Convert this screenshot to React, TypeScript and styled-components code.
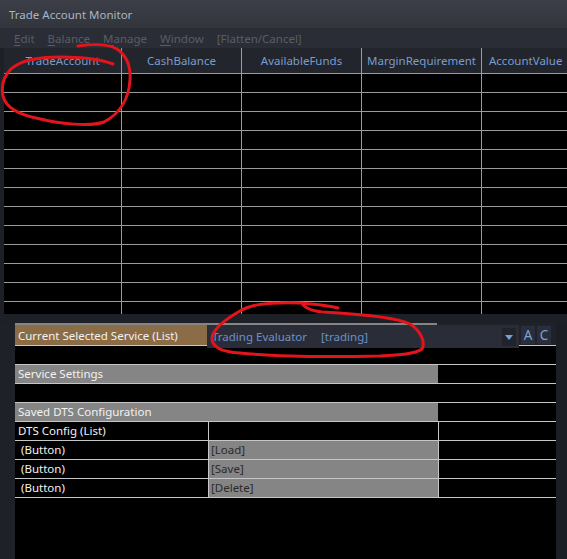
import styled, { createGlobalStyle } from 'styled-components';

const GlobalStyle = createGlobalStyle`
  html, body {
    margin: 0;
    padding: 0;
    background: #1e2027;
    overflow: hidden;
  }
`;

const Window = styled.div`
  position: relative;
  width: 567px;
  height: 559px;
  display: flex;
  flex-direction: column;
  background: #1e2027;
  overflow: hidden;
  font-family: "Noto Sans", "Open Sans", sans-serif;
  font-size: 11.5px;
`;

const TitleBar = styled.div`
  flex: none;
  height: 28px;
  display: flex;
  align-items: center;
  padding-left: 9px;
  background: linear-gradient(#3c3f47, #32353c);
  color: #a7b5c8;
  font-size: 11.5px;
`;

const MenuBar = styled.div`
  flex: none;
  height: 20px;
  display: flex;
  align-items: center;
  gap: 13px;
  padding-left: 14px;
  background: #2a2d35;
  color: #585d68;
  font-size: 11.5px;
`;

const Accel = styled.span`
  text-decoration: underline;
  text-underline-offset: 2px;
`;

const GridWrap = styled.div`
  flex: none;
  padding: 0 0 9px 4px;
`;

const Grid = styled.div`
  height: 266px;
  overflow: hidden;
  background: #000;
  display: flex;
  flex-direction: column;
`;

const HeaderRow = styled.div`
  flex: none;
  display: flex;
  height: 25px;
  background: #23252c;
  border-bottom: 1px solid #9a9a9a;
`;

const HeaderCell = styled.div<{ $w: number; $last?: boolean }>`
  flex: none;
  width: ${(p) => p.$w}px;
  border-right: ${(p) => (p.$last ? 'none' : '1px solid #9a9a9a')};
  color: #779dd0;
  line-height: 25px;
  text-align: ${(p) => (p.$last ? 'left' : 'center')};
  padding-left: ${(p) => (p.$last ? 7 : 0)}px;
  white-space: nowrap;
  overflow: hidden;
`;

const BodyRow = styled.div`
  flex: none;
  display: flex;
  height: 18px;
  border-bottom: 1px solid #9a9a9a;
`;

const BodyCell = styled.div<{ $w: number; $last?: boolean }>`
  flex: none;
  width: ${(p) => p.$w}px;
  border-right: ${(p) => (p.$last ? 'none' : '1px solid #9a9a9a')};
`;

const Panel = styled.div`
  flex: 1;
  display: flex;
`;

const PanelMargin = styled.div`
  flex: none;
  width: 15px;
  background: #1e2128;
`;

const PanelBody = styled.div`
  position: relative;
  flex: none;
  width: 541px;
  background: #000;
  display: flex;
  flex-direction: column;
`;

const Scrollbar = styled.div`
  flex: 1;
  background: #1b1e25;
`;

const PropRow = styled.div<{ $h?: number }>`
  flex: none;
  display: flex;
  height: ${(p) => p.$h ?? 18}px;
  border-bottom: 1px solid #c6c6c6;
  color: #f2f2f2;
  line-height: 18px;
`;

const LabelCell = styled.div`
  flex: none;
  width: 192px;
  box-sizing: border-box;
  border-top: 2px solid #858585;
  background: #8a6c47;
  padding-left: 3px;
  line-height: 21px;
  white-space: nowrap;
`;

const ValueBack = styled.div`
  flex: none;
  width: 230px;
  background: #858585;
`;

const RestBack = styled.div`
  flex: 1;
  background: #1f222a;
`;

const SectionCell = styled.div`
  flex: none;
  width: 423px;
  background: #858585;
  padding-left: 3px;
  box-sizing: border-box;
`;

const Cell = styled.div<{ $w?: number; $gray?: boolean; $indent?: number; $edge?: boolean }>`
  flex: ${(p) => (p.$w ? 'none' : '1')};
  width: ${(p) => (p.$w ? `${p.$w}px` : 'auto')};
  box-sizing: border-box;
  border-right: ${(p) => (p.$edge ? '1px solid #c6c6c6' : 'none')};
  background: ${(p) => (p.$gray ? '#858585' : '#000')};
  color: ${(p) => (p.$gray ? '#2b2b2b' : '#f2f2f2')};
  padding-left: ${(p) => p.$indent ?? 3}px;
  white-space: nowrap;
`;

const Editor = styled.div`
  position: absolute;
  left: 192px;
  top: 2px;
  right: 0;
  height: 21px;
  display: flex;
  align-items: flex-start;
`;

const Combo = styled.div`
  flex: none;
  width: 312px;
  height: 23px;
  box-sizing: border-box;
  display: flex;
  align-items: center;
  padding-left: 5px;
  background: #2a2d38;
  color: #6b91c6;
  position: relative;
`;

const ComboTag = styled.span`
  margin-left: 14px;
`;

const DropButton = styled.div`
  position: absolute;
  right: 3px;
  top: 3px;
  width: 14px;
  height: 18px;
  background: #20232c;
  display: flex;
  align-items: center;
  justify-content: center;
`;

const EditButton = styled.div`
  flex: none;
  width: 14px;
  height: 18px;
  margin-left: 2px;
  margin-top: 1px;
  background: #2a2e3a;
  color: #7ca2d8;
  font-size: 13.5px;
  line-height: 18px;
  text-align: center;
`;

const Marks = styled.svg`
  position: absolute;
  left: 0;
  top: 0;
  pointer-events: none;
`;

const columns = [
  { name: 'TradeAccount', w: 117 },
  { name: 'CashBalance', w: 119 },
  { name: 'AvailableFunds', w: 119 },
  { name: 'MarginRequirement', w: 119 },
  { name: 'AccountValue', w: 86 },
];

const menu = [
  { a: 'E', rest: 'dit' },
  { a: 'B', rest: 'alance' },
  { a: 'M', rest: 'anage' },
  { a: 'W', rest: 'indow' },
];

const buttons = ['[Load]', '[Save]', '[Delete]'];

export default function App() {
  return (
    <Window>
      <GlobalStyle />
      <TitleBar>Trade Account Monitor</TitleBar>
      <MenuBar>
        {menu.map((m) => (
          <span key={m.a}>
            <Accel>{m.a}</Accel>
            {m.rest}
          </span>
        ))}
        <span>[Flatten/Cancel]</span>
      </MenuBar>
      <GridWrap>
        <Grid>
          <HeaderRow>
            {columns.map((c, i) => (
              <HeaderCell key={c.name} $w={c.w} $last={i === columns.length - 1}>
                {c.name}
              </HeaderCell>
            ))}
          </HeaderRow>
          {Array.from({ length: 13 }).map((_, r) => (
            <BodyRow key={r}>
              {columns.map((c, i) => (
                <BodyCell key={c.name} $w={c.w} $last={i === columns.length - 1} />
              ))}
            </BodyRow>
          ))}
        </Grid>
      </GridWrap>
      <Panel>
        <PanelMargin />
        <PanelBody>
          <PropRow $h={22}>
            <LabelCell>Current Selected Service (List)</LabelCell>
            <ValueBack />
            <RestBack />
          </PropRow>
          <PropRow />
          <PropRow>
            <SectionCell>Service Settings</SectionCell>
          </PropRow>
          <PropRow />
          <PropRow>
            <SectionCell>Saved DTS Configuration</SectionCell>
          </PropRow>
          <PropRow>
            <Cell $w={194} $edge>DTS Config (List)</Cell>
            <Cell $w={230} $edge />
            <Cell />
          </PropRow>
          {buttons.map((b) => (
            <PropRow key={b}>
              <Cell $w={194} $edge $indent={6}>(Button)</Cell>
              <Cell $w={230} $edge $gray $indent={2}>{b}</Cell>
              <Cell />
            </PropRow>
          ))}
          <Editor>
            <Combo>
              <span>Trading Evaluator</span>
              <ComboTag>[trading]</ComboTag>
              <DropButton>
                <svg width="8" height="5" viewBox="0 0 8 5">
                  <path d="M0 0 L8 0 L4 5 Z" fill="#7a9fd3" />
                </svg>
              </DropButton>
            </Combo>
            <EditButton>A</EditButton>
            <EditButton>C</EditButton>
          </Editor>
        </PanelBody>
        <Scrollbar />
      </Panel>
      <Marks width="567" height="559" viewBox="0 0 567 559">
        <g fill="none" stroke="#e3141b" strokeWidth="3" strokeLinecap="round" strokeLinejoin="round">
          <path d="M78 46 C92 44 108 44 117 49 C127 56 131 66 130 80 C129 97 121 113 104 122 C90 127 60 124 36 118 C18 114 6 108 3 96 C1 86 4 76 11 69 C20 61 36 57 60 57 C80 57 100 59 113 64" />
          <path d="M338 308 C325 305 300 302 280 303 C264 303 250 305 240 311 C226 319 213 328 212 338 C212 347 222 352 240 353 C270 356 330 357 380 356 C400 355 415 354 422 349 C426 342 420 330 410 324 C396 317 360 314 322 312 C313 311 306 308 303 305" />
        </g>
      </Marks>
    </Window>
  );
}
